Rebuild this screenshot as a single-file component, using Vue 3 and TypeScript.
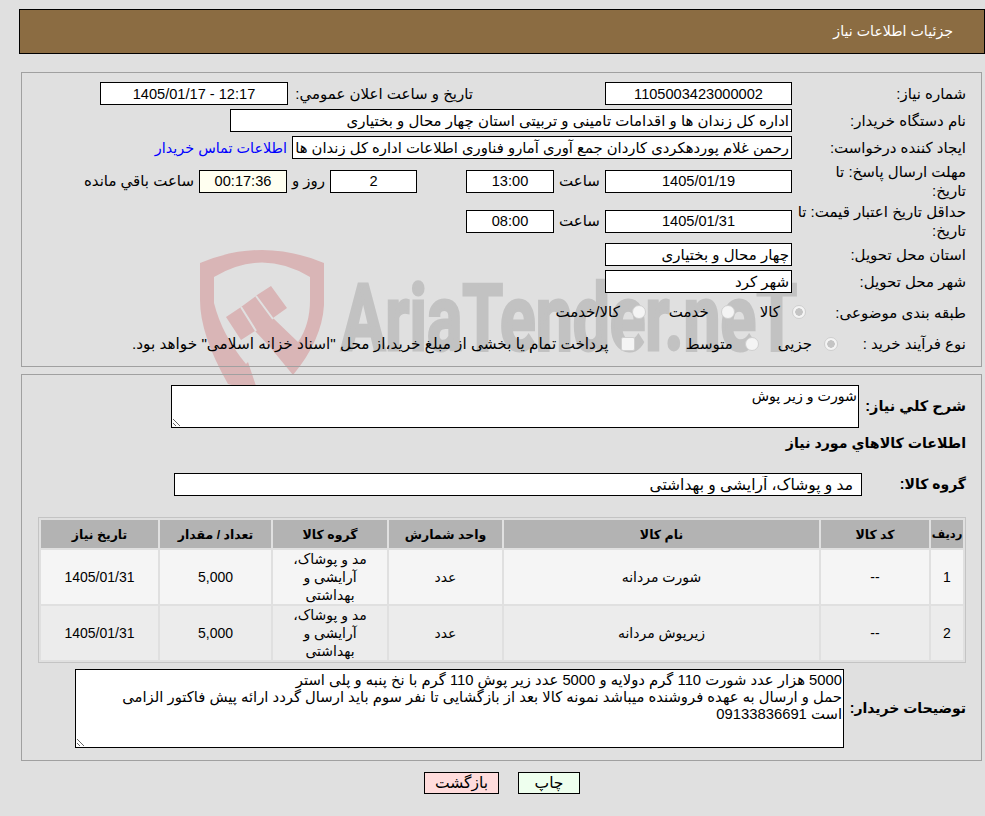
<script setup lang="ts">
interface Item { id: number; code: string; name: string; unit: string; group: string; qty: string; date: string }
const items: Item[] = [
  { id: 1, code: '--', name: 'شورت مردانه', unit: 'عدد', group: 'مد و پوشاک، آرایشی و بهداشتی', qty: '5,000', date: '1405/01/31' },
  { id: 2, code: '--', name: 'زیرپوش مردانه', unit: 'عدد', group: 'مد و پوشاک، آرایشی و بهداشتی', qty: '5,000', date: '1405/01/31' },
]
const desc = '5000 هزار عدد شورت 110 گرم دولایه و 5000 عدد زیر پوش 110 گرم با نخ پنبه و پلی استر\nحمل و ارسال به عهده فروشنده میباشد نمونه کالا بعد از بازگشایی تا نفر سوم باید ارسال گردد ارائه پیش فاکتور الزامی است 09133836691'
</script>

<template>
  <div class="page" dir="rtl">
    <svg class="mark" width="985" height="816" viewBox="0 0 985 816" aria-hidden="true">
      <path class="shield" d="M200 263 Q262 237 324 263 L324 305 Q322 340 293 375 L270 347 L255 331 L241 340 L226 317 L241 307 L256 296 L257 295 L271 286 L287 308 L273 318 L298 342 Q310 325 310 300 L310 277 Q262 248 214 277 L214 303 Q222 335 246 364 L248 362 L258 392 L228 384 Q200 335 200 300 Z" />
      <path class="cut" d="M241 307 L256 331 M256 296 L273 319" />
      <text class="brand" x="341" y="350" textLength="456" lengthAdjust="spacingAndGlyphs">AriaTender.neT</text>
    </svg>

    <header class="title">جزئیات اطلاعات نیاز</header>

    <section class="panel first">
      <div class="row h27">
        <label class="lab">شماره نیاز:</label>
        <input class="box w187 num mr132" readonly value="1105003423000002" />
        <span class="txt w180">تاریخ و ساعت اعلان عمومي:</span>
        <input class="box w188 num ltr" readonly value="1405/01/17 - 12:17" />
      </div>
      <div class="row h27">
        <label class="lab">نام دستگاه خریدار:</label>
        <input class="box w562 start" readonly value="اداره کل زندان ها و اقدامات تامینی و تربیتی استان چهار محال و بختیاری" />
      </div>
      <div class="row h27">
        <label class="lab">ایجاد کننده درخواست:</label>
        <input class="box w500 start fit" readonly value="رحمن غلام پوردهکردی کاردان جمع آوری آمارو فناوری اطلاعات اداره کل زندان ها" />
        <a class="link" href="#">اطلاعات تماس خریدار</a>
      </div>
      <div class="row h40">
        <label class="lab">مهلت ارسال پاسخ: تا<br />تاریخ:</label>
        <input class="box w187 num" readonly value="1405/01/19" />
        <span class="txt w46">ساعت</span>
        <input class="box w88 num" readonly value="13:00" />
        <input class="box w87 num ms50" readonly value="2" />
        <span class="txt w43">روز و</span>
        <input class="box w88 num ivory" readonly value="00:17:36" />
        <span class="txt">ساعت باقي مانده</span>
      </div>
      <div class="row h40">
        <label class="lab">حداقل تاریخ اعتبار قیمت: تا<br />تاریخ:</label>
        <input class="box w187 num" readonly value="1405/01/31" />
        <span class="txt w46">ساعت</span>
        <input class="box w88 num" readonly value="08:00" />
      </div>
      <div class="row h27">
        <label class="lab">استان محل تحویل:</label>
        <input class="box w187 start" readonly value="چهار محال و بختیاری" />
      </div>
      <div class="row h27">
        <label class="lab">شهر محل تحویل:</label>
        <input class="box w187 start" readonly value="شهر کرد" />
      </div>
      <div class="row h34">
        <label class="lab lab160">طبقه بندی موضوعی:</label>
        <input class="opt" type="radio" name="cat" checked disabled />
        <span class="opttxt g25">کالا</span>
        <input class="opt" type="radio" name="cat" disabled />
        <span class="opttxt g23">خدمت</span>
        <input class="opt" type="radio" name="cat" disabled />
        <span class="opttxt">کالا/خدمت</span>
      </div>
      <div class="row h29">
        <label class="lab lab128">نوع فرآیند خرید :</label>
        <input class="opt" type="radio" name="proc" checked disabled />
        <span class="opttxt g19">جزیی</span>
        <input class="opt" type="radio" name="proc" disabled />
        <span class="opttxt g51">متوسط</span>
        <input class="opt square" type="checkbox" disabled />
        <span class="opttxt wide">پرداخت تمام یا بخشی از مبلغ خرید،از محل "اسناد خزانه اسلامی" خواهد بود.</span>
      </div>
    </section>

    <section class="panel second">
      <div class="row">
        <label class="lab strong big lab108">شرح كلي نياز:</label>
        <textarea class="area short" readonly>شورت و زیر پوش</textarea>
      </div>
      <h3 class="sub">اطلاعات كالاهاي مورد نياز</h3>
      <div class="row group">
        <label class="lab strong lab105">گروه کالا:</label>
        <input class="box w688 pad" readonly value="مد و پوشاک، آرایشی و بهداشتی" />
      </div>
      <table class="grid">
        <colgroup>
          <col class="c1" /><col class="c2" /><col class="c3" /><col class="c4" /><col class="c5" /><col class="c6" /><col class="c7" />
        </colgroup>
        <thead>
          <tr>
            <th class="tiny">ردیف</th><th>کد کالا</th><th>نام کالا</th><th>واحد شمارش</th><th>گروه کالا</th><th>تعداد / مقدار</th><th>تاریخ نیاز</th>
          </tr>
        </thead>
        <tbody>
          <tr v-for="it in items" :key="it.id">
            <td>{{ it.id }}</td>
            <td>{{ it.code }}</td>
            <td>{{ it.name }}</td>
            <td>{{ it.unit }}</td>
            <td class="wrap">{{ it.group }}</td>
            <td>{{ it.qty }}</td>
            <td>{{ it.date }}</td>
          </tr>
        </tbody>
      </table>
      <div class="row buyer">
        <label class="lab strong lab123">توضیحات خریدار:</label>
        <textarea class="area tall" readonly :value="desc"></textarea>
      </div>
    </section>

    <footer class="actions">
      <button class="btn print" type="button">چاپ</button>
      <button class="btn back" type="button">بازگشت</button>
    </footer>
  </div>
</template>

<style>
html, body { margin: 0; background: #e0e0e0; }
</style>

<style scoped>
.page {
  position: relative;
  box-sizing: border-box;
  width: 985px;
  height: 816px;
  overflow: hidden;
  padding: 9px 0 0 19px;
  background: #e0e0e0;
  color: #000;
  font-family: "Liberation Sans", "DejaVu Sans", sans-serif;
  font-size: 15px;
}
.mark { position: absolute; top: 0; left: 0; z-index: 0; pointer-events: none; direction: ltr; }
.shield { fill: #d9b5b6; }
.cut { stroke: #e0e0e0; stroke-width: 2; fill: none; }
.brand {
  direction: ltr;
  font-family: Roboto, sans-serif;
  font-weight: 700;
  font-size: 92px;
  fill: #c2c2c2;
  stroke: #c2c2c2;
  stroke-width: 3px;
}

.title {
  position: relative;
  z-index: 1;
  box-sizing: border-box;
  height: 45px;
  line-height: 43px;
  padding-right: 31px;
  border: 1px solid #000;
  background: #8b6c42;
  color: #fff;
  font-size: 14.2px;
}
.panel {
  position: relative;
  z-index: 1;
  margin: 0 3px 0 2px;
  border: 1px solid #a0a0a0;
  padding-left: 16px;
  padding-right: 15px;
}
.first { margin-top: 18px; padding-top: 7px; padding-bottom: 8px; }
.second { margin-top: 7px; padding-top: 10px; height: 387px; box-sizing: border-box; }

.row { display: flex; align-items: center; }
.h27 { height: 27px; }
.h29 { height: 29px; }
.h34 { height: 34px; }
.h40 { height: 40px; }
.lab { flex: none; width: 174px; box-sizing: border-box; white-space: nowrap; line-height: 19px; }
.lab160 { width: 160px; }
.lab128 { width: 128px; }
.lab108 { width: 107px; }
.lab105 { width: 104px; }
.lab123 { width: 122px; }
.strong { font-weight: 700; font-size: 14px; }
.big { font-size: 14.5px; }

.box {
  flex: none;
  box-sizing: border-box;
  height: 23px;
  margin: 0;
  padding: 0 2px;
  border: 1px solid #000;
  border-radius: 0;
  outline: none;
  background: #fff;
  color: #000;
  font: inherit;
  text-align: right;
}
.num { text-align: center; font-size: 14.6px; }
.ltr { direction: ltr; }
.start { text-align: right; }
.fit { font-size: 14.8px; }
.pad { padding-right: 8px; font-size: 15.5px; }
.ivory { background: #fffff0; }
.w187 { width: 187px; }
.w188 { width: 188px; }
.w88 { width: 88px; }
.w87 { width: 87px; }
.w562 { width: 562px; }
.w500 { width: 500px; }
.w688 { width: 688px; }
.mr132 { margin-left: 132px; }
.ms50 { margin-right: 49px; }
.txt { flex: none; padding: 0 5px 0 5px; box-sizing: border-box; }
.w180 { width: 185px; padding: 0; padding-left: 6px; }
.w46 { width: 51px; text-align: center; padding: 0; }
.w43 { width: 43px; text-align: center; padding: 0; }
.link { margin-right: 5px; color: #0000ff; text-decoration: none; font-size: 14.4px; }

.opt {
  appearance: none;
  flex: none;
  box-sizing: border-box;
  width: 14px;
  height: 14px;
  margin: 0 0 0 12px;
  border: 1px solid #cfcfcf;
  border-radius: 50%;
  background: #f4f4f4;
}
.opt:checked { background: radial-gradient(circle, #c4c4c4 0 3.5px, #f4f4f4 4px); }
.square { border-radius: 2px; }
.opttxt { flex: none; }
.wide { font-size: 15.3px; }
.g25 { margin-left: 25px; }
.g23 { margin-left: 23px; }
.g19 { margin-left: 19px; }
.g51 { margin-left: 51px; }

.area {
  display: block;
  box-sizing: border-box;
  margin: 0;
  padding: 2px 1px 0;
  border: 1px solid #000;
  border-radius: 0;
  outline: none;
  background: #fff;
  color: #000;
  font: inherit;
  line-height: 17px;
  resize: both;
}
.short { width: 688px; height: 43px; font-size: 14.2px; }
.tall { width: 769px; height: 79px; padding-left: 17px; font-size: 14.8px; }
.sub {
  margin: 0;
  height: 30px;
  line-height: 30px;
  font-size: 14.2px;
  font-weight: 700;
}
.group { margin-top: 15px; }

.grid {
  margin-top: 21px;
  width: 928px;
  table-layout: fixed;
  border-collapse: separate;
  border-spacing: 2px;
  border: 1px solid #c4c4c4;
  font-size: 14px;
}
.c1 { width: 32px; }
.c2 { width: 108px; }
.c3 { width: 315px; }
.c4 { width: 113px; }
.c5 { width: 114px; }
.c6 { width: 111px; }
.c7 { width: 117px; }
.grid th {
  height: 28px;
  padding: 0;
  background: #b3b3b3;
  font-weight: 700;
  font-size: 12.5px;
}
.grid th.tiny { font-size: 11.5px; }
.grid td {
  height: 53px;
  padding: 0;
  text-align: center;
  line-height: 18px;
  background: #f5f5f5;
}
.grid tbody tr:nth-child(2) td { background: #ececec; }
.wrap { padding: 0 12px !important; }
.buyer { margin-top: 6px; }

.actions {
  position: relative;
  z-index: 1;
  display: flex;
  justify-content: center;
  gap: 19px;
  margin-top: 11px;
}
.btn {
  box-sizing: border-box;
  height: 22px;
  padding: 0;
  border: 1px solid #000;
  border-radius: 0;
  color: #000;
  font: inherit;
  font-size: 15.5px;
  line-height: 20px;
}
.print { width: 62px; background: #eeffee; }
.back { width: 75px; background: #ffdcdc; }
</style>
